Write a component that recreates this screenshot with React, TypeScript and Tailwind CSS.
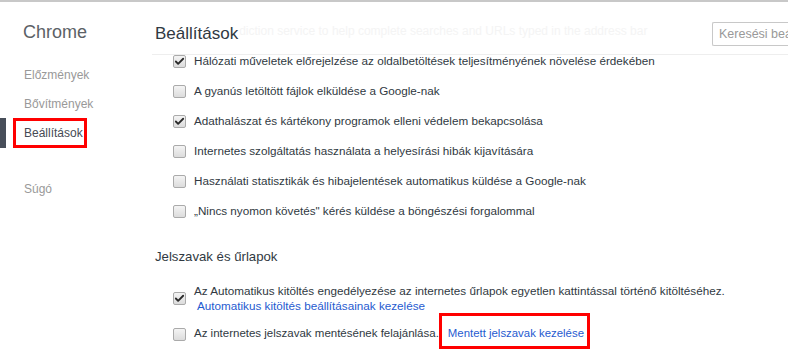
import { Check } from 'lucide-react'

interface BoxProps {
  checked?: boolean
}

function Box({ checked }: BoxProps) {
  return (
    <span className="w-[13px] h-[13px] shrink-0 rounded-[2px] border border-[#aaaaaa] bg-gradient-to-b from-[#f4f4f4] to-[#dcdcdc] flex items-center justify-center">
      {checked && <Check className="w-[11px] h-[11px] text-[#2a2a2a]" strokeWidth={4} />}
    </span>
  )
}

const rows = [
  { checked: true, text: 'Hálózati műveletek előrejelzése az oldalbetöltések teljesítményének növelése érdekében' },
  { checked: false, text: 'A gyanús letöltött fájlok elküldése a Google-nak' },
  { checked: true, text: 'Adathalászat és kártékony programok elleni védelem bekapcsolása' },
  { checked: false, text: 'Internetes szolgáltatás használata a helyesírási hibák kijavítására' },
  { checked: false, text: 'Használati statisztikák és hibajelentések automatikus küldése a Google-nak' },
  { checked: false, text: '„Nincs nyomon követés" kérés küldése a böngészési forgalommal' },
]

export default function App() {
  return (
    <div className="w-[788px] h-[358px] overflow-hidden bg-white border-t-2 border-[#c8c8c8] flex font-['Liberation_Sans',sans-serif] text-[11.7px] text-[#303942]">
      {/* sidebar */}
      <div className="w-[152px] shrink-0 flex flex-col">
        <h1 className="pl-[23px] pt-[19px] h-[58px] text-[18px] text-[#5c6166] leading-[22px]">Chrome</h1>
        <nav className="flex flex-col text-[12px] text-[#999999]">
          <div className="h-[29px] flex items-center pl-[24px]">Előzmények</div>
          <div className="h-[29px] flex items-center pl-[24px]">Bővítmények</div>
          <div className="h-[30px] flex items-stretch">
            <span className="w-[6px] bg-[#474e59]" />
            <span className="ml-[7px] pl-[8px] pr-[1px] border-[3px] border-[#ff0000] flex items-center text-[#464a54]">Beállítások</span>
          </div>
          <div className="h-[26px]" />
          <div className="h-[29px] flex items-center pl-[24px]">Súgó</div>
        </nav>
      </div>

      {/* main */}
      <div className="flex-1 min-w-0 flex flex-col">
        <div className="h-[53px] shrink-0 border-b border-[#eeeeee] flex items-center pl-[3px] pt-[12px]">
          <h2 className="shrink-0 text-[17px] text-[#303942] leading-[22px]">Beállítások</h2>
          <div className="flex-1 min-w-0 overflow-hidden ml-[1px] mt-[-6px] text-[12px] text-[#f4f4f4] whitespace-nowrap">diction service to help complete searches and URLs typed in the address bar</div>
          <div className="w-[76px] h-[24px] shrink-0 border border-[#c8c8c8] rounded-l-[2px] border-r-0 flex items-center pl-[6px] text-[#999999] text-[12.5px] whitespace-nowrap overflow-hidden">Keresési beállítások</div>
        </div>

        <div className="flex-1 min-h-0 overflow-hidden">
          <div className="flex flex-col pl-[21px] -mt-[9px]">
            {rows.map((r, i) => (
              <div key={i} className="h-[30px] flex items-center gap-[8px]">
                <Box checked={r.checked} />
                <span className="whitespace-nowrap">{r.text}</span>
              </div>
            ))}
          </div>

          <div className="mt-[22px] pl-[3px] text-[13.2px] leading-[18px]">Jelszavak és űrlapok</div>

          <div className="flex flex-col pl-[21px] mt-[17px]">
            <div className="flex items-center gap-[8px]">
              <Box checked />
              <div className="flex flex-col leading-[15px]">
                <span className="whitespace-nowrap">Az Automatikus kitöltés engedélyezése az internetes űrlapok egyetlen kattintással történő kitöltéséhez.</span>
                <span className="pl-[3px] text-[#1f5bd0] whitespace-nowrap">Automatikus kitöltés beállításainak kezelése</span>
              </div>
            </div>
            <div className="h-[36px] flex items-stretch">
              <div className="pt-[6px] flex items-center gap-[8px]">
                <Box />
                <span className="whitespace-nowrap text-[11.5px]">Az internetes jelszavak mentésének felajánlása.</span>
              </div>
              <span className="pl-[6px] pr-[3px] pt-[6px] border-[3px] border-[#ff0000] flex items-center text-[11.4px] text-[#1f5bd0] whitespace-nowrap">Mentett jelszavak kezelése</span>
            </div>
          </div>
        </div>
      </div>
    </div>
  )
}
